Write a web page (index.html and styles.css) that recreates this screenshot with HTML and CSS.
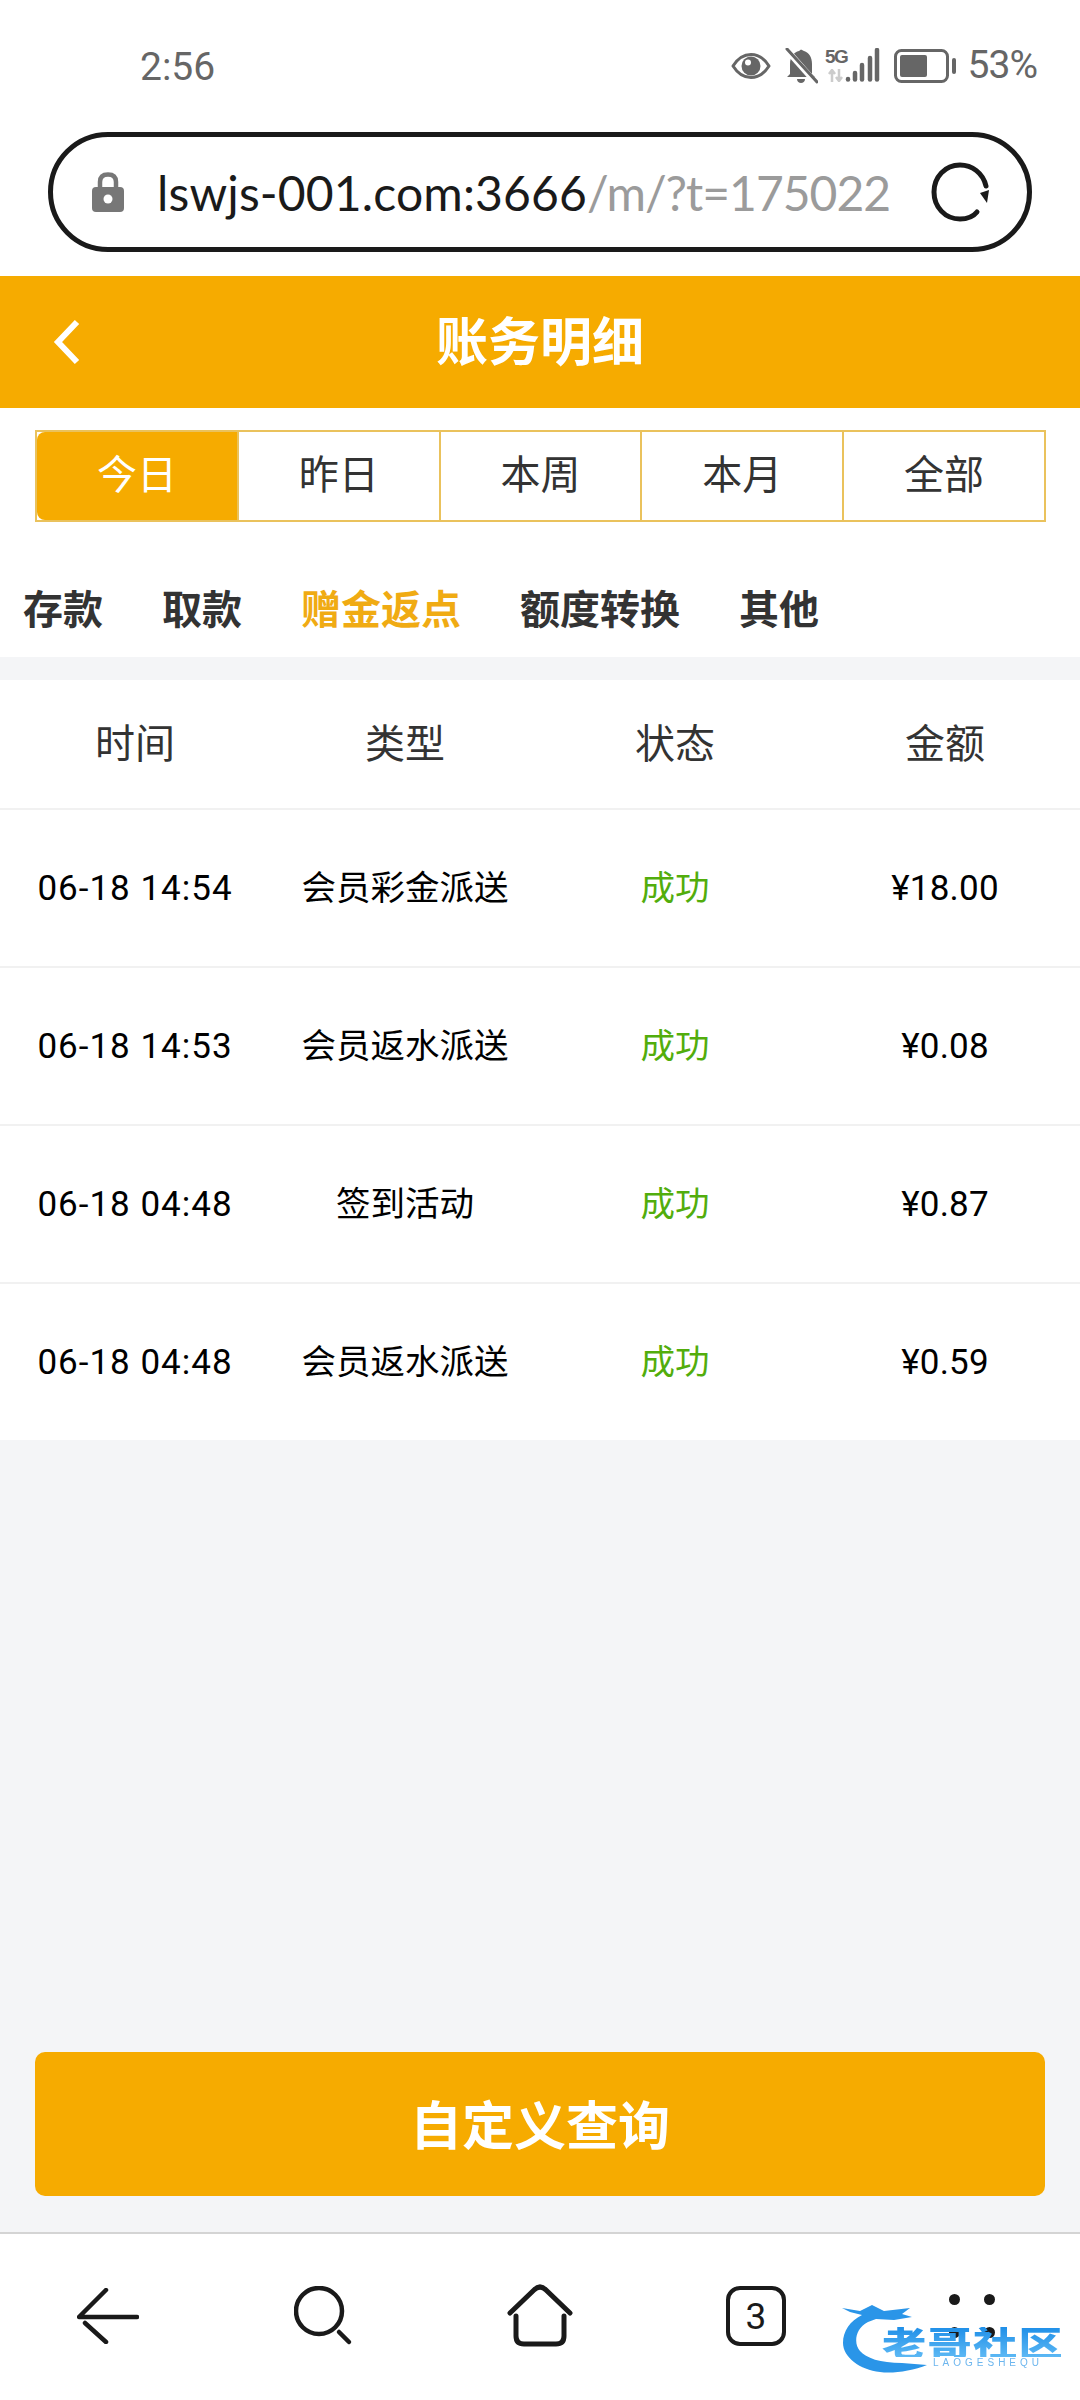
FILE: index.html
```html
<!DOCTYPE html>
<html>
<head>
  <meta charset="utf-8">
  <title>账务明细</title>
  <meta name="viewport" content="width=device-width">
  <link rel="stylesheet" href="styles.css">
</head>
<body>

<div class="status-bar">
  <span class="status-time">2:56</span>
  <div class="status-icons">
    <svg class="ic-eye" width="40" height="28" viewBox="0 0 40 28">
      <path d="M2 14C7 6 13 2.500 20 2.500S33 6 38 14C33 22 27 25.500 20 25.500S7 22 2 14Z" fill="none" stroke="#666" stroke-width="3" stroke-linejoin="round"/>
      <circle cx="20" cy="14" r="9.500" fill="#666"/>
      <circle cx="17" cy="10.500" r="3" fill="#fff"/>
    </svg>
    <svg class="ic-bell" width="34" height="36" viewBox="0 0 34 36">
      <path d="M6 26V16C6 9 10 4 15 3L17 1.500L20 3C25 4.500 28 9 28 16V26L31 29H3Z" fill="#666"/>
      <path d="M13 31H21C21 33.500 19 35 17 35S13 33.500 13 31Z" fill="#666"/>
      <path d="M1 0L32 35" stroke="#fff" stroke-width="6"/>
      <path d="M3 1L33 34" stroke="#666" stroke-width="3" stroke-linecap="round"/>
    </svg>
    <div class="signal">
      <div class="net">
        <span class="net-5g">5G</span>
        <svg width="16" height="13" viewBox="0 0 16 13">
          <path d="M4 13V2M1 5L4 1L7 5M11 0V11M8 8L11 12L14 8" fill="none" stroke="#ccc" stroke-width="2.500"/>
        </svg>
      </div>
      <svg width="35" height="34" viewBox="0 0 35 34">
        <g stroke="#666" stroke-width="4.500" stroke-linecap="round">
          <path d="M3 31V31.500"/>
          <path d="M10 25V31.500"/>
          <path d="M17 17V31.500"/>
          <path d="M25 10V31.500"/>
          <path d="M32 2V31.500"/>
        </g>
      </svg>
    </div>
    <svg class="ic-battery" width="62" height="34" viewBox="0 0 62 34">
      <rect x="1.500" y="1.500" width="52" height="31" rx="6" fill="none" stroke="#666" stroke-width="3"/>
      <rect x="6" y="6" width="27" height="22" rx="2" fill="#666"/>
      <rect x="58" y="9" width="4" height="16" rx="2" fill="#666"/>
    </svg>
    <span class="status-pct">53%</span>
  </div>
</div>

<div class="url-wrap">
  <div class="url-bar">
    <svg class="ic-lock" width="32" height="40" viewBox="0 0 32 40">
      <path d="M8 17V10C8 5 11 2.500 16 2.500S24 5 24 10V17" fill="none" stroke="#777" stroke-width="4.500"/>
      <rect x="0" y="15" width="32" height="25" rx="4" fill="#777"/>
      <circle cx="16" cy="27" r="4.500" fill="#fff"/>
    </svg>
    <div class="url-text"><span class="url-host">lswjs-001.com:3666</span><span class="url-path">/m/?t=175022</span></div>
    <svg class="ic-reload" width="60" height="60" viewBox="0 0 60 60">
      <path d="M55 24C52 11 41 3 29 3C14 3 3 15 3 30S14 57 29 57C36 57 42 55 46 50" fill="none" stroke="#1a1a1a" stroke-width="5" stroke-linecap="round"/>
      <path d="M49 31L58 28L56 41Z" fill="#1a1a1a"/>
    </svg>
  </div>
</div>

<header class="page-head">
  <svg class="ic-back" width="30" height="46" viewBox="0 0 30 46">
    <path d="M25 3L6 23L25 43" fill="none" stroke="#fff" stroke-width="6"/>
  </svg>
  <h1 class="page-title">账务明细</h1>
</header>

<div class="range-tabs">
  <div class="range-tab active">今日</div>
  <div class="range-tab">昨日</div>
  <div class="range-tab">本周</div>
  <div class="range-tab">本月</div>
  <div class="range-tab">全部</div>
</div>

<nav class="type-tabs">
  <span>存款</span>
  <span>取款</span>
  <span class="active">赠金返点</span>
  <span>额度转换</span>
  <span>其他</span>
</nav>

<main class="content">
  <div class="table">
    <div class="tr th">
      <div>时间</div><div>类型</div><div>状态</div><div>金额</div>
    </div>
    <div class="tr">
      <div class="time">06-18 14:54</div><div class="cn">会员彩金派送</div><div class="cn ok">成功</div><div class="money">¥18.00</div>
    </div>
    <div class="tr">
      <div class="time">06-18 14:53</div><div class="cn">会员返水派送</div><div class="cn ok">成功</div><div class="money">¥0.08</div>
    </div>
    <div class="tr">
      <div class="time">06-18 04:48</div><div class="cn">签到活动</div><div class="cn ok">成功</div><div class="money">¥0.87</div>
    </div>
    <div class="tr">
      <div class="time">06-18 04:48</div><div class="cn">会员返水派送</div><div class="cn ok">成功</div><div class="money">¥0.59</div>
    </div>
  </div>
  <button class="query-btn" type="button">自定义查询</button>
</main>

<footer class="browser-nav">
  <div class="nav-cell">
    <svg width="62" height="56" viewBox="0 0 62 56">
      <path d="M29 2L2 29H60M8 35L29 54" fill="none" stroke="#1a1a1a" stroke-width="4.500" stroke-linecap="round" stroke-linejoin="round"/>
    </svg>
  </div>
  <div class="nav-cell">
    <svg width="60" height="60" viewBox="0 0 60 60">
      <circle cx="25" cy="25" r="23" fill="none" stroke="#1a1a1a" stroke-width="4.500"/>
      <path d="M45 46L55 56" stroke="#1a1a1a" stroke-width="4.500" stroke-linecap="round"/>
    </svg>
  </div>
  <div class="nav-cell">
    <svg width="66" height="66" viewBox="0 0 66 66">
      <path d="M3 30L27 7Q33 1 39 7L63 30" fill="none" stroke="#1a1a1a" stroke-width="5" stroke-linecap="round"/>
      <path d="M9 33V53Q9 61 17 61H49Q57 61 57 53V33" fill="none" stroke="#1a1a1a" stroke-width="5" stroke-linecap="round"/>
    </svg>
  </div>
  <div class="nav-cell">
    <div class="tab-count">3</div>
  </div>
  <div class="nav-cell">
    <div class="more-dots"><i></i><i></i><i></i><i></i></div>
  </div>
  <!-- site mark sitting on top of the bar -->
  <div class="site-mark">
    <svg class="site-dragon" width="90" height="70" viewBox="0 0 90 70">
      <path d="M0 3L18 6L30 0L42 6L68 3L60 9L70 12L52 15L34 14L26 17C12 24 12 40 18 46C24 53 38 58 60 58L85 60C70 66 50 69 38 67C18 65 1 52 1 38C1 26 8 16 20 10L8 7Z" fill="#2a95e8"/>
    </svg>
    <div class="site-name">老哥社区</div>
    <div class="site-sub">LAOGESHEQU</div>
  </div>
</footer>

</body>
</html>
```

FILE: styles.css
```css
* {
  box-sizing: border-box;
}

html, body {
  margin: 0;
  padding: 0;
}

body {
  width: 1080px;
  height: 2400px;
  display: flex;
  flex-direction: column;
  background: #fff;
  font-family: "Noto Sans CJK SC", "Noto Sans", sans-serif;
  overflow: hidden;
}

/* phone status row */
.status-bar {
  height: 132px;
  padding: 45px 43px 0 140px;
  display: flex;
  justify-content: space-between;
  align-items: flex-start;
  flex: none;
}

.status-time,
.status-pct {
  font-family: Roboto, sans-serif;
  font-size: 39px;
  line-height: 45px;
  color: #666;
}

.status-icons {
  display: flex;
  align-items: center;
  height: 41px;
}

.ic-bell {
  margin-left: 13px;
}

.signal {
  display: flex;
  align-items: flex-end;
  margin: 0 0 3px 10px;
}

.net {
  display: flex;
  flex-direction: column;
  align-items: center;
  width: 17px;
}

.net-5g {
  font-family: "Liberation Sans Narrow", "Liberation Sans", sans-serif;
  font-size: 19px;
  line-height: 19px;
  font-weight: 700;
  color: #666;
  letter-spacing: -1.500px;
  margin-bottom: 3px;
}

.ic-battery {
  margin-left: 14px;
}

.status-pct {
  margin-left: 12px;
  letter-spacing: -1px;
}

/* address bar */
.url-wrap {
  height: 144px;
  padding: 0 48px;
  flex: none;
}

.url-bar {
  height: 120px;
  border: 5px solid #1a1a1a;
  border-radius: 60px;
  padding: 0 36px 0 39px;
  display: flex;
  align-items: center;
}

.ic-lock {
  flex: none;
}

.url-text {
  margin-left: 33px;
  width: 740px;
  white-space: nowrap;
  font-family: Lato, sans-serif;
  font-size: 48px;
}

.url-host {
  color: #1a1a1a;
  letter-spacing: 0.150px;
}

.url-path {
  color: #9b9b9b;
  letter-spacing: -1px;
}

.ic-reload {
  margin-left: auto;
  flex: none;
}

/* orange title */
.page-head {
  height: 132px;
  flex: none;
  background: #f6ab00;
  padding-bottom: 8px;
  display: flex;
  align-items: center;
  justify-content: center;
  position: relative;
}

.ic-back {
  position: absolute;
  left: 52px;
  top: 43px;
}

.page-title {
  margin: 0;
  font-size: 52px;
  font-weight: 700;
  color: #fff;
}

.range-tabs {
  margin: 22px 34px 0 35px;
  height: 92px;
  flex: none;
  display: flex;
  border: 2px solid #eac25c;
}

.range-tab {
  flex: 1;
  padding-bottom: 9px;
  display: flex;
  align-items: center;
  justify-content: center;
  font-size: 40px;
  color: #333;
  border-left: 2px solid #eac25c;
}

.range-tab:first-child {
  border-left: none;
}

.range-tab.active {
  background: #f6ab00;
  border-radius: 8px 0 0 8px;
  color: #fff;
}

.type-tabs {
  height: 135px;
  flex: none;
  padding: 34px 23px 0;
  display: flex;
  gap: 59px;
  align-items: center;
  font-size: 40px;
  font-weight: 700;
  color: #333;
}

.type-tabs .active {
  color: #f0ab13;
}

/* records */
.content {
  flex: 1;
  background: #f4f5f7;
  padding-top: 23px;
  display: flex;
  flex-direction: column;
}

.table {
  background: #fff;
}

.tr {
  height: 158px;
  display: grid;
  grid-template-columns: repeat(4, 270px);
  align-items: center;
  text-align: center;
  font-size: 35px;
  color: #000;
  border-top: 2px solid #f1f1f1;
}

.time,
.money {
  font-family: Roboto, "Noto Sans CJK SC", sans-serif;
}

.time {
  letter-spacing: 1px;
}

.money {
  letter-spacing: 0.200px;
}

.cn {
  padding-bottom: 6px;
  font-size: 34.500px;
}

.tr.th {
  height: 128px;
  padding-bottom: 6px;
  border-top: none;
  font-size: 40px;
  color: #333;
}

.ok {
  color: #52ad0c;
}

.query-btn {
  margin: auto 35px 36px;
  height: 144px;
  padding: 0 0 3px;
  border: none;
  border-radius: 10px;
  background: #f6ab00;
  color: #fff;
  font-family: "Noto Sans CJK SC", sans-serif;
  font-size: 52px;
  font-weight: 700;
}

/* browser toolbar */
.browser-nav {
  height: 168px;
  flex: none;
  display: grid;
  grid-template-columns: repeat(5, 216px);
  border-top: 2px solid #d4d4d4;
  position: relative;
}

.nav-cell {
  display: flex;
  align-items: center;
  justify-content: center;
  padding-bottom: 2px;
}

.tab-count {
  width: 60px;
  height: 60px;
  border: 4.500px solid #1a1a1a;
  border-radius: 14px;
  display: flex;
  align-items: center;
  justify-content: center;
  font-family: Roboto, sans-serif;
  font-size: 37px;
  color: #1a1a1a;
}

.more-dots {
  width: 46px;
  display: grid;
  grid-template-columns: 11px 11px;
  justify-content: space-between;
  row-gap: 22px;
}

.more-dots i {
  width: 11px;
  height: 11px;
  border-radius: 50%;
  background: #1a1a1a;
}

.site-mark {
  position: absolute;
  left: 842px;
  top: 71px;
  width: 222px;
  height: 68px;
  filter: blur(0.6px);
}

.site-dragon {
  position: absolute;
  left: 0;
  top: 0;
}

.site-name {
  position: absolute;
  left: 40px;
  top: 22px;
  font-size: 34px;
  line-height: 30px;
  font-weight: 900;
  letter-spacing: 1px;
  transform: scaleX(1.3);
  transform-origin: left center;
  background: linear-gradient(#1f8fe8, #5cb8f4);
  -webkit-background-clip: text;
  background-clip: text;
  color: transparent;
  white-space: nowrap;
}

.site-sub {
  position: absolute;
  left: 91px;
  top: 52px;
  font-family: "Liberation Sans", sans-serif;
  font-size: 10px;
  line-height: 12px;
  letter-spacing: 4px;
  color: #6db6ee;
  white-space: nowrap;
}
```
